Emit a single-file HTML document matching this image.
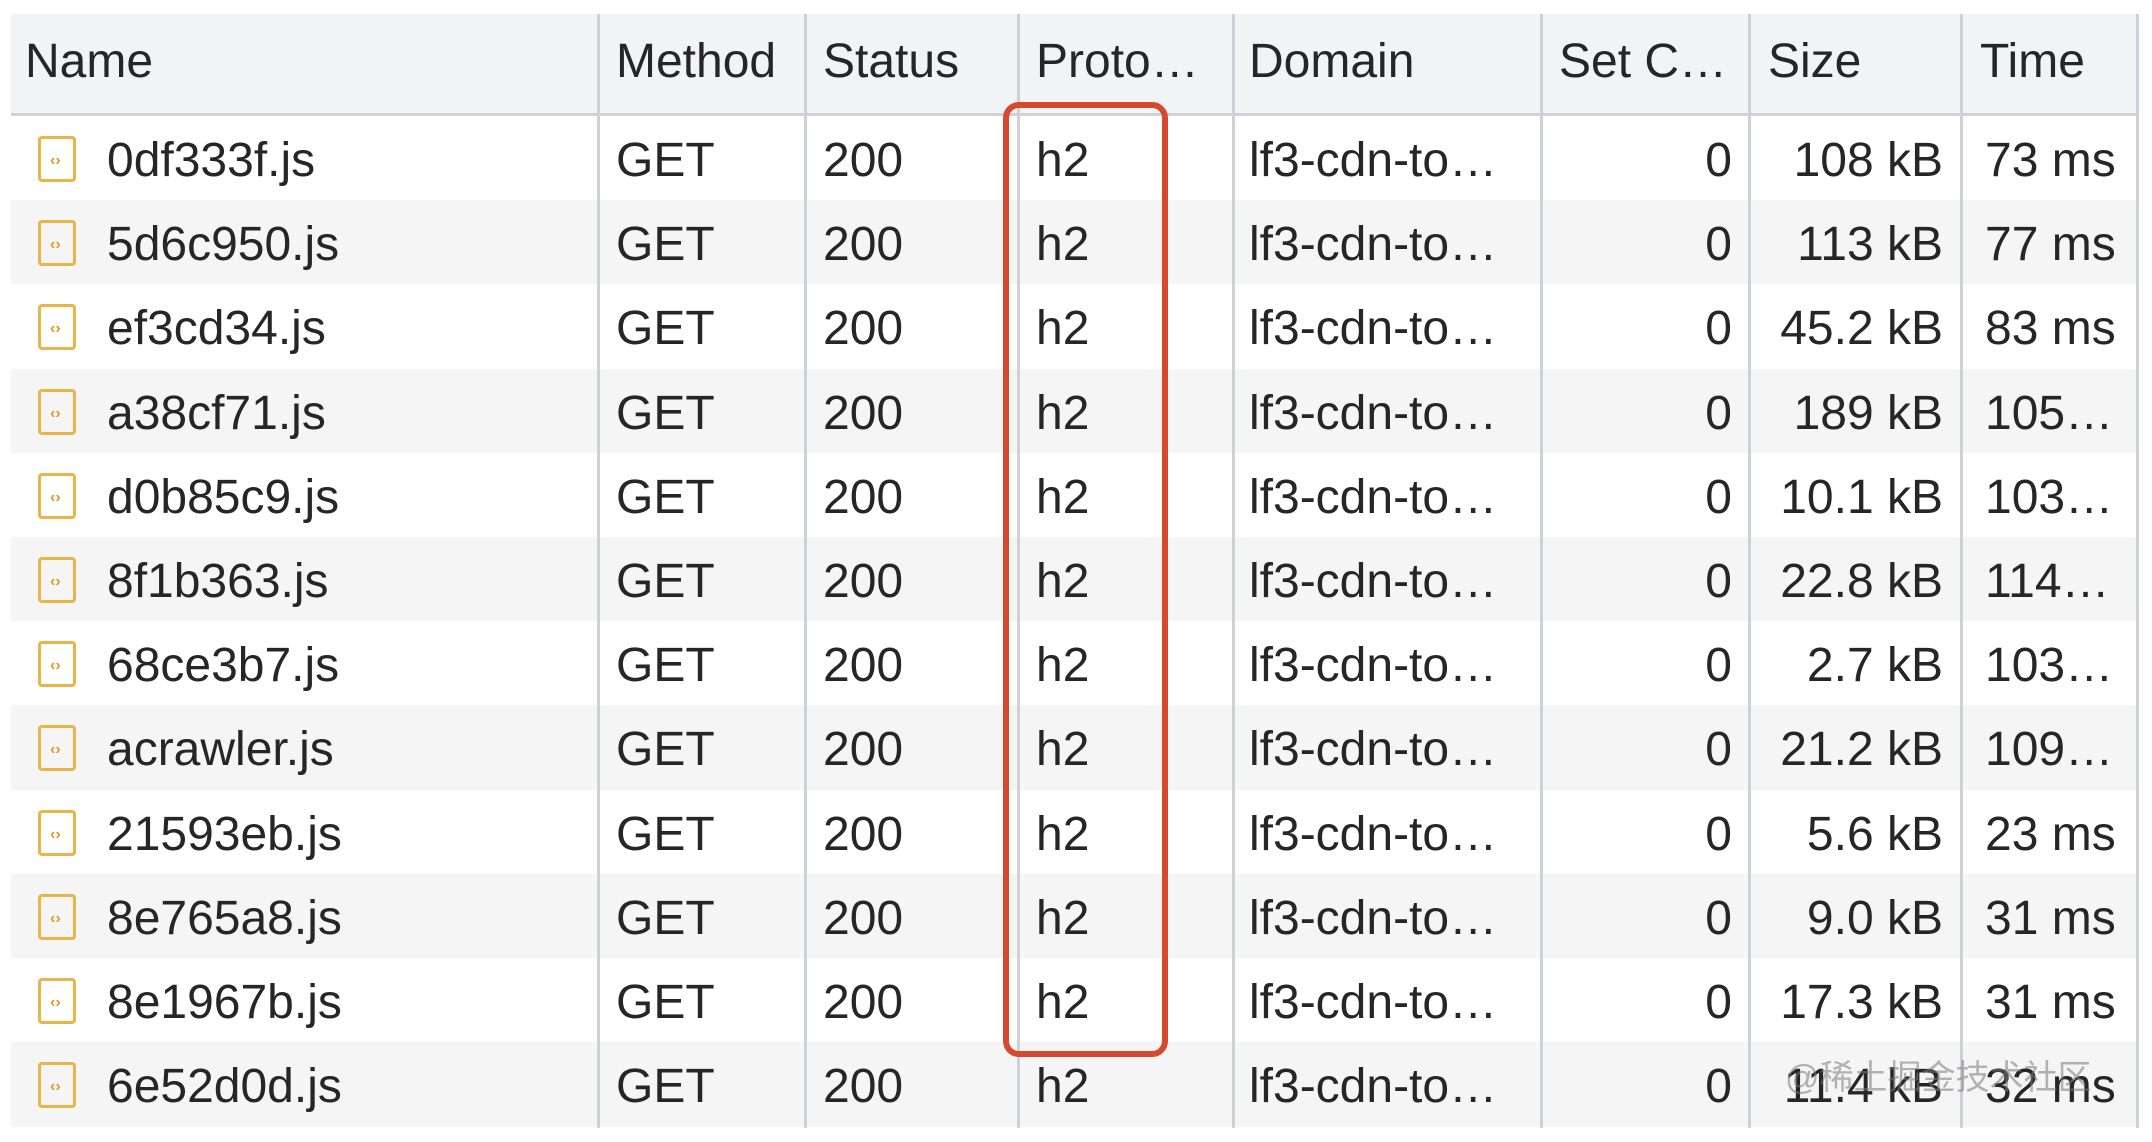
<!DOCTYPE html>
<html><head><meta charset="utf-8"><style>
body{margin:0;width:2152px;height:1142px;background:#fff;position:relative;overflow:hidden;font-family:"Liberation Sans",Arial,sans-serif;color:#262626}
.r{position:absolute;left:11px;width:2127px;height:85px}
.h{position:absolute;left:11px;top:14px;width:2127px;height:102px;background:#f1f3f4;border-bottom:3px solid #cfd2d6;box-sizing:border-box}
.v{position:absolute;width:3px;background:#cdd0d4;top:14px;height:1114px}
.t{position:absolute;font-size:48px;line-height:84px;white-space:nowrap}
.ic{position:absolute;width:38px;height:46px;border:3px solid #e8b54a;border-radius:4px;box-sizing:border-box}
.ic:after{content:"‹›";position:absolute;left:9px;top:14px;font-size:16px;line-height:16px;color:#e0982a;font-weight:bold}
</style></head><body>
<div class="h"></div>
<div id="rows"></div>
<div class="v" style="left:597px"></div>
<div class="v" style="left:804px"></div>
<div class="v" style="left:1017px"></div>
<div class="v" style="left:1232px"></div>
<div class="v" style="left:1540px"></div>
<div class="v" style="left:1748px"></div>
<div class="v" style="left:1960px"></div>
<div class="v" style="left:2136px"></div>
<div class="t" style="left:25px;top:20px">Name</div>
<div class="t" style="left:616px;top:20px">Method</div>
<div class="t" style="left:823px;top:20px">Status</div>
<div class="t" style="left:1036px;top:20px">Proto…</div>
<div class="t" style="left:1249px;top:20px">Domain</div>
<div class="t" style="left:1559px;top:20px">Set C…</div>
<div class="t" style="left:1768px;top:20px">Size</div>
<div class="t" style="left:1980px;top:20px">Time</div>
<script>
var d=[["0df333f.js","108 kB","73 ms"],["5d6c950.js","113 kB","77 ms"],["ef3cd34.js","45.2 kB","83 ms"],["a38cf71.js","189 kB","105…"],["d0b85c9.js","10.1 kB","103…"],["8f1b363.js","22.8 kB","114…"],["68ce3b7.js","2.7 kB","103…"],["acrawler.js","21.2 kB","109…"],["21593eb.js","5.6 kB","23 ms"],["8e765a8.js","9.0 kB","31 ms"],["8e1967b.js","17.3 kB","31 ms"],["6e52d0d.js","11.4 kB","32 ms"]];
var h="";
d.forEach(function(r,i){var y=Math.round(116+84.2*i);var ty=y+3;
h+='<div class="r" style="top:'+y+'px;background:'+(i%2?'#f5f5f5':'#fff')+'"></div>';
h+='<div class="ic" style="left:38px;top:'+(y+20)+'px"></div>';
h+='<div class="t" style="left:107px;top:'+ty+'px">'+r[0]+'</div>';
h+='<div class="t" style="left:616px;top:'+ty+'px">GET</div>';
h+='<div class="t" style="left:823px;top:'+ty+'px">200</div>';
h+='<div class="t" style="left:1036px;top:'+ty+'px">h2</div>';
h+='<div class="t" style="left:1249px;top:'+ty+'px">lf3-cdn-to…</div>';
h+='<div class="t" style="right:420px;top:'+ty+'px">0</div>';
h+='<div class="t" style="right:209px;top:'+ty+'px">'+r[1]+'</div>';
h+='<div class="t" style="left:1985px;top:'+ty+'px">'+r[2]+'</div>';});
document.getElementById("rows").innerHTML=h;
</script>
<div style="position:absolute;left:1003px;top:102px;width:165px;height:955px;border:6px solid #d6492e;border-radius:16px;box-sizing:border-box"></div>
<div style="position:absolute;left:1785px;top:1050px;font-size:34px;color:rgba(120,120,120,0.55);font-family:'Liberation Sans','Noto Sans CJK SC',sans-serif;white-space:nowrap">@稀土掘金技术社区</div>
</body></html>
